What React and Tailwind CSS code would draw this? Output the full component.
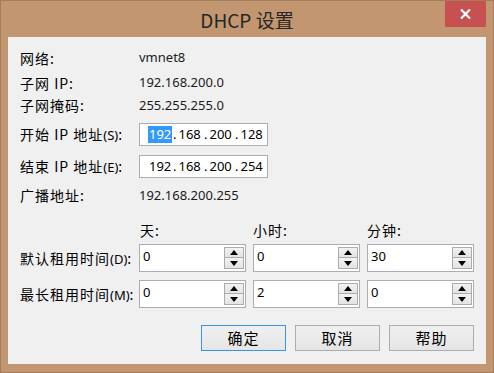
import React from 'react';

const cjk = { fontFamily: '"Noto Sans CJK SC", "Noto Sans", sans-serif' };

const Label = ({ children, hint }) => (
  <div className="w-[119px] shrink-0 text-[14px] tracking-[1px] text-black leading-none whitespace-nowrap" style={cjk}>
    {children}
    {hint && <span className="text-[13px] tracking-normal font-['Noto_Sans',sans-serif]">({hint})</span>}
    :
  </div>
);

const Value = ({ children }) => (
  <div className="text-[13px] text-[#1a1a1a] font-['Noto_Sans',sans-serif] leading-none">{children}</div>
);

const Row = ({ className, children }) => (
  <div className={`flex items-center ${className}`}>{children}</div>
);

const IpBox = ({ parts, selected }) => (
  <div className="w-[129px] h-[23px] border border-[#abadb3] bg-white flex items-center pl-[8px] text-[13px] text-black font-['Noto_Sans',sans-serif] leading-none">
    <span className="w-[25px] flex items-center">
      {selected ? (
        <>
          <span className="bg-[#3399ff] text-white px-[1px] py-[2px]">{parts[0]}</span>
          <span className="w-[1px] h-[17px] bg-[#d9731e] ml-[1px]" />
        </>
      ) : (
        <span className="px-[1px]">{parts[0]}</span>
      )}
    </span>
    {parts.slice(1).map((p, i) => (
      <span key={i} className="w-[31px] flex items-center">
        <span>.</span>
        <span className="ml-[2px]">{p}</span>
      </span>
    ))}
  </div>
);

const Arrow = ({ up }) => (
  <svg width="8" height="5" viewBox="0 0 8 5">
    {up ? <path d="M0 5 L4 0 L8 5 Z" fill="#000" /> : <path d="M0 0 L8 0 L4 5 Z" fill="#000" />}
  </svg>
);

const Spinner = ({ value }) => (
  <div className="w-[107px] h-[28px] border border-[#abadb3] bg-white flex">
    <div className="flex-1 pl-[3px] pt-[5px] text-[13px] text-black font-['Noto_Sans',sans-serif] leading-none">{value}</div>
    <div className="w-[20px] mr-[1px] py-[2px] flex flex-col">
      <div className="h-[11px] border border-[#acacac] bg-gradient-to-b from-[#f2f2f2] to-[#e3e3e3] flex items-center justify-center">
        <Arrow up />
      </div>
      <div className="h-[11px] border border-t-0 border-[#acacac] bg-gradient-to-b from-[#f2f2f2] to-[#e3e3e3] flex items-center justify-center">
        <Arrow />
      </div>
    </div>
  </div>
);

const Button = ({ children, primary }) => (
  <button
    className={`w-[85px] h-[26px] border bg-gradient-to-b from-[#f0f0f0] to-[#e5e5e5] text-[15px] tracking-[1px] text-black flex items-center justify-center ${
      primary ? 'border-[#3c94e6]' : 'border-[#acacac]'
    }`}
    style={cjk}
  >
    {children}
  </button>
);

export default function App() {
  return (
    <div className="w-[494px] h-[373px] bg-[#c29671] border border-[#a17d5c] flex flex-col">
      {/* title bar */}
      <div className="h-[36px] shrink-0 relative flex items-center justify-center">
        <span className="text-[19px] text-[#262626] leading-none pt-[1px]" style={cjk}>DHCP 设置</span>
        <div className="absolute top-0 right-[7px] w-[41px] h-[26px] bg-[#c75050] flex items-center justify-center">
          <svg width="11" height="10" viewBox="0 0 11 10">
            <path d="M1 0.5 L10 9.5 M10 0.5 L1 9.5" stroke="#fff" strokeWidth="2.2" />
          </svg>
        </div>
      </div>

      {/* client area */}
      <div className="mx-[7px] h-[327px] shrink-0 bg-[#f0f0f0] pl-[12px] pr-[12px] flex flex-col">
        <Row className="mt-[8px] h-[25px]">
          <Label>网络</Label>
          <Value>vmnet8</Value>
        </Row>
        <Row className="h-[25px]">
          <Label>子网 IP</Label>
          <Value>192.168.200.0</Value>
        </Row>
        <Row className="h-[20px]">
          <Label>子网掩码</Label>
          <Value>255.255.255.0</Value>
        </Row>
        <Row className="mt-[8px] h-[23px]">
          <Label hint="S">开始 IP 地址</Label>
          <IpBox parts={['192', '168', '200', '128']} selected />
        </Row>
        <Row className="mt-[9px] h-[23px]">
          <Label hint="E">结束 IP 地址</Label>
          <IpBox parts={['192', '168', '200', '254']} />
        </Row>
        <Row className="mt-[6px] h-[22px]">
          <Label>广播地址</Label>
          <Value>192.168.200.255</Value>
        </Row>

        <Row className="mt-[16px] h-[16px]">
          <div className="w-[119px] shrink-0" />
          <div className="flex gap-[7px] text-[14px] tracking-[1px] text-black leading-none" style={cjk}>
            <span className="w-[107px] pl-[1px]">天:</span>
            <span className="w-[107px]">小时:</span>
            <span className="w-[107px]">分钟:</span>
          </div>
        </Row>
        <Row className="mt-[6px] h-[28px]">
          <Label hint="D">默认租用时间</Label>
          <div className="flex gap-[7px]">
            <Spinner value="0" />
            <Spinner value="0" />
            <Spinner value="30" />
          </div>
        </Row>
        <Row className="mt-[8px] h-[28px]">
          <Label hint="M">最长租用时间</Label>
          <div className="flex gap-[7px]">
            <Spinner value="0" />
            <Spinner value="2" />
            <Spinner value="0" />
          </div>
        </Row>

        <div className="mt-[17px] flex justify-end gap-[9px]">
          <Button primary>确定</Button>
          <Button>取消</Button>
          <Button>帮助</Button>
        </div>
      </div>
    </div>
  );
}
